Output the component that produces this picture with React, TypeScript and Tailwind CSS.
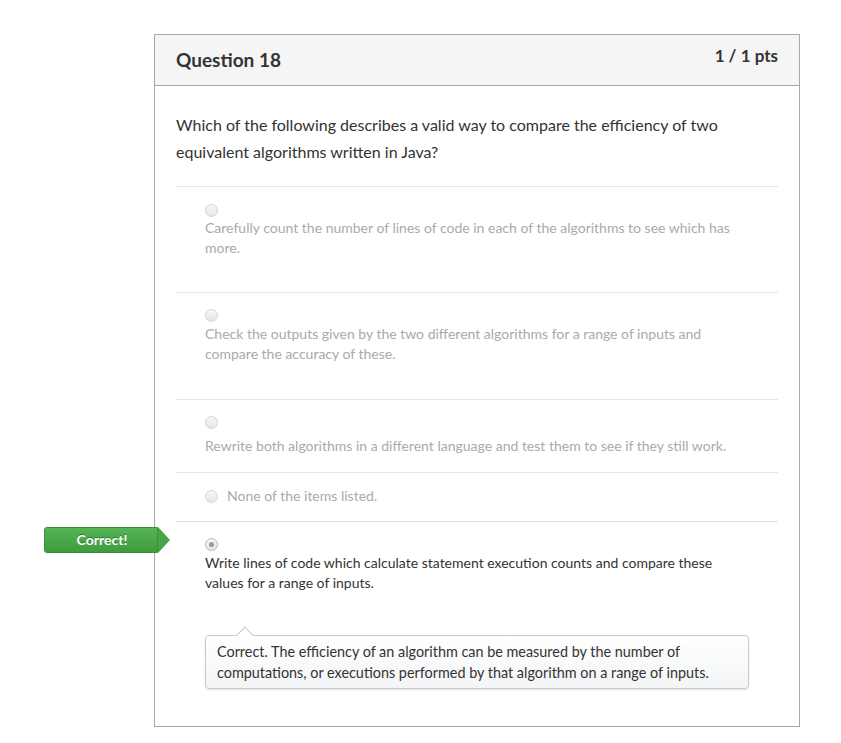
import React from "react"

const Radio = ({ checked = false }: { checked?: boolean }) => (
  <span
    className={
      "flex h-[13px] w-[13px] shrink-0 items-center justify-center rounded-full border bg-gradient-to-b from-[#f7f7f7] to-[#e6e6e6] " +
      (checked ? "border-[#b5b5b5]" : "border-[#d4d4d4]")
    }
  >
    {checked && <span className="h-[5px] w-[5px] rounded-full bg-[#999]" />}
  </span>
)

export default function App() {
  return (
    <div className="min-h-screen bg-white pl-[154px] pt-[34px] font-[Lato,sans-serif]">
      <div className="w-[646px] h-[693px] border border-[#a8a8a8]">
        {/* header */}
        <div className="flex h-[51px] justify-between border-b border-[#a8a8a8] bg-[#f5f5f5] px-[21px]">
          <div className="mt-[14px] text-[19px] leading-[1.2] font-bold text-[#333]">Question 18</div>
          <div className="mt-[11px] text-[17px] leading-[1.2] font-bold text-[#333]">1 / 1 pts</div>
        </div>

        <div className="px-[21px]">
          <p className="pt-[25px] pb-[21px] text-[16px] leading-[27px] text-[#333]">
            Which of the following describes a valid way to compare the efficiency of two equivalent algorithms
            written in Java?
          </p>

          {/* option 1 */}
          <div className="border-t border-[#e6e6e6] pl-[29px] pt-[17px] pb-[34px] text-[14px] leading-[20px] text-[#aaa]">
            <Radio />
            <div className="mt-[1px] pr-[40px]">
              Carefully count the number of lines of code in each of the algorithms to see which has more.
            </div>
          </div>

          {/* option 2 */}
          <div className="border-t border-[#e6e6e6] pl-[29px] pt-[16px] pb-[35px] text-[14px] leading-[20px] text-[#aaa]">
            <Radio />
            <div className="mt-[2px] pr-[40px]">
              Check the outputs given by the two different algorithms for a range of inputs and compare the
              accuracy of these.
            </div>
          </div>

          {/* option 3 */}
          <div className="border-t border-[#e6e6e6] pl-[29px] pt-[16px] pb-[16px] text-[14px] leading-[20px] text-[#aaa]">
            <Radio />
            <div className="mt-[7px]">
              Rewrite both algorithms in a different language and test them to see if they still work.
            </div>
          </div>

          {/* option 4 */}
          <div className="flex items-center gap-[9px] border-t border-[#e6e6e6] pl-[29px] pt-[13px] pb-[15px] text-[14px] leading-[20px] text-[#aaa]">
            <Radio />
            <span>None of the items listed.</span>
          </div>

          {/* option 5 - correct */}
          <div className="relative border-t border-[#dcdcdc] pl-[29px] pt-[16px] text-[14px] leading-[20px] text-[#333]">
            <div className="absolute left-[-132px] top-[5px] flex h-[26px] items-center">
              <div className="flex h-[26px] w-[114px] items-center justify-center rounded-l-[3px] border border-[#3b8f3b] bg-gradient-to-b from-[#55b455] to-[#3e9c3e] pl-[2px] text-[14px] font-bold text-white [text-shadow:0_-1px_0_rgba(0,0,0,0.35)]">
                Correct!
              </div>
              <div className="h-0 w-0 border-y-[13px] border-l-[12px] border-y-transparent border-l-[#47a547]" />
            </div>
            <Radio checked />
            <div className="mt-[2px] pr-[60px]">
              Write lines of code which calculate statement execution counts and compare these values for a range
              of inputs.
            </div>

            {/* feedback */}
            <div className="relative mt-[42px] w-[544px] rounded-[4px] border border-[#c6cbd0] bg-gradient-to-b from-white to-[#f3f5f7] px-[11px] py-[5px] text-[14.4px] leading-[21px] text-[#333] shadow-[0_1px_2px_rgba(0,0,0,0.12)]">
              <span className="absolute left-[33px] top-[-7px] h-[12px] w-[12px] rotate-45 border-l border-t border-[#c6cbd0] bg-white" />
              <span className="relative">
                Correct. The efficiency of an algorithm can be measured by the number of computations, or
                executions performed by that algorithm on a range of inputs.
              </span>
            </div>
          </div>
        </div>
      </div>
    </div>
  )
}
